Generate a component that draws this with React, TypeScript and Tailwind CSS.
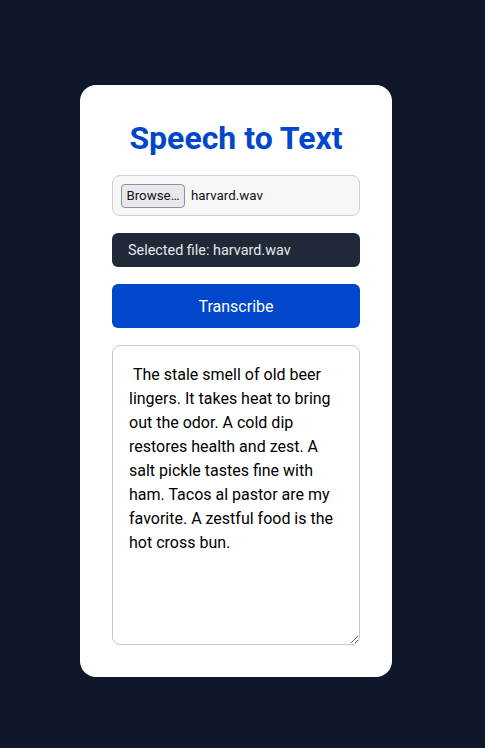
import React from "react";

const text =
  " The stale smell of old beer lingers. It takes heat to bring out the odor. A cold dip restores health and zest. A salt pickle tastes fine with ham. Tacos al pastor are my favorite. A zestful food is the hot cross bun.";

export default function App() {
  return (
    <div
      className="min-h-[748px] w-full bg-[#0f172a] pt-[85px] pl-[80px]"
      style={{ fontFamily: "Roboto, 'Liberation Sans', sans-serif" }}
    >
      <div className="w-[312px] h-[592px] bg-white rounded-[16px] px-[32px] pt-[35px] flex flex-col">
        <h1 className="text-[32px] leading-[37px] font-bold text-[#0047cc] text-center">
          Speech to Text
        </h1>
        <div className="mt-[18px] h-[41px] rounded-[8px] border border-[#cfcfd4] bg-[#f7f7f8] flex items-center pl-[8px] pt-[1px]">
          <div className="h-[24px] w-[64px] rounded-[4px] border border-[#8f8f9d] bg-[#e9e9ed] text-[13.33px] text-[#111] flex items-center justify-center">
            Browse…
          </div>
          <span className="ml-[6px] text-[13.33px] text-[#111]">harvard.wav</span>
        </div>
        <div className="mt-[17px] h-[34px] rounded-[6px] bg-[#1f2937] text-[#e5e7eb] text-[14.4px] flex items-center px-[16px] pt-[2px]">
          Selected file: harvard.wav
        </div>
        <button className="mt-[17px] h-[44px] rounded-[6px] bg-[#0047cc] text-white text-[16px] flex items-center justify-center pt-[2px]">
          Transcribe
        </button>
        <textarea
          readOnly
          value={text}
          className="mt-[17px] h-[300px] w-full rounded-[8px] border border-[#c8c8cc] px-[16px] pt-[17px] pb-[15px] text-[16px] leading-[24px] text-black outline-none"
          style={{ fontFamily: "Roboto, 'Liberation Sans', sans-serif" }}
        />
      </div>
    </div>
  );
}
